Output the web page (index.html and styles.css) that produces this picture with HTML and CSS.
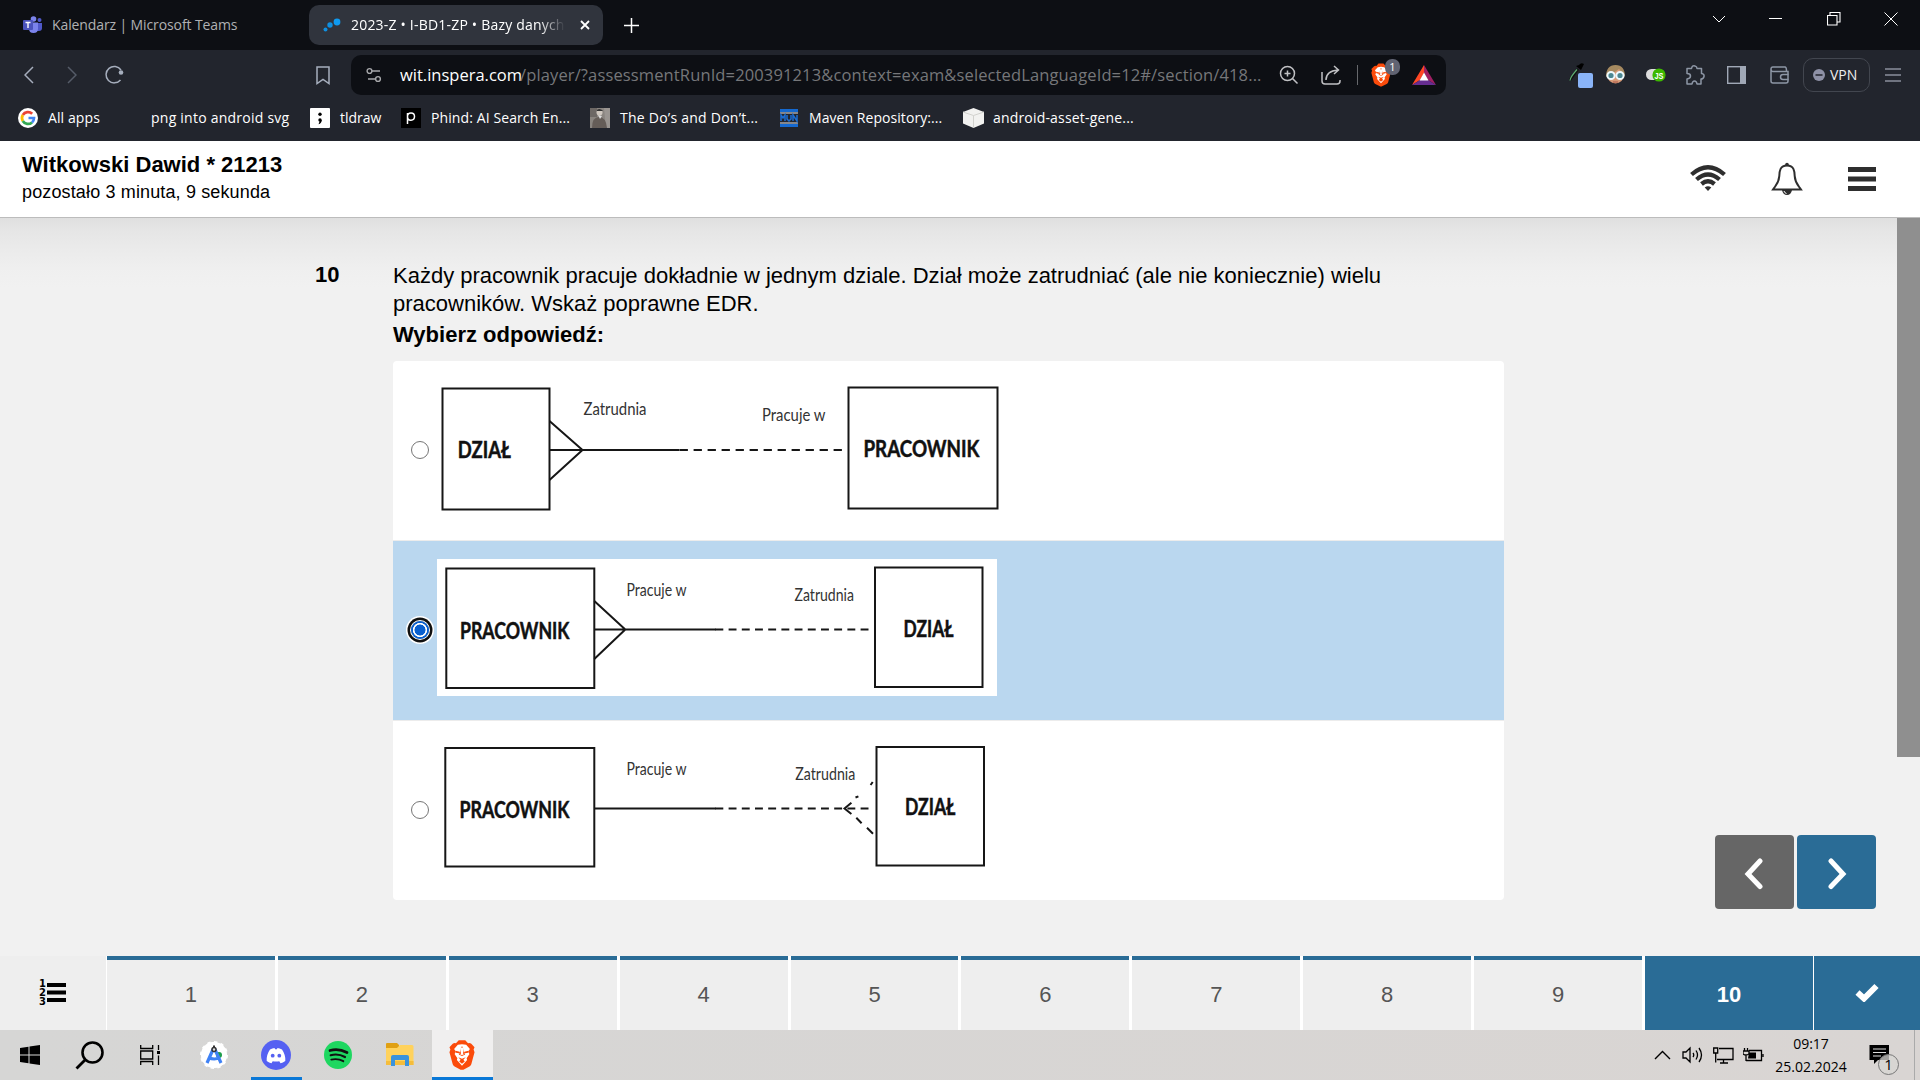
FILE: index.html
```html
<!DOCTYPE html>
<html lang="pl">
<head>
<meta charset="utf-8">
<title>2023-Z • I-BD1-ZP • Bazy danych</title>
<link rel="stylesheet" href="styles.css">
</head>
<body>
<div class="screen">
  <div class="tabstrip">
    <div class="tab">
      <svg class="ic" width="20" height="18" viewBox="0 0 20 18"><circle cx="16.500" cy="4" r="2" fill="#5059c9"/><path d="M14 7h5v5q0 3-3 3h-2z" fill="#5059c9"/><circle cx="10.500" cy="3" r="2.800" fill="#7b83eb"/><path d="M6 6.500h9v6q0 4.500-4.500 4.500T6 12.500z" fill="#7b83eb"/><rect x="0" y="4" width="10" height="10" rx="1" fill="#4b53bc"/><path d="M2.500 6.500h5M5 6.500v5.500" stroke="#fff" stroke-width="1.400"/></svg>
      <span class="t-kal">Kalendarz | Microsoft Teams</span>
    </div>
    <div class="tab active">
      <svg class="ic" width="18" height="16" viewBox="0 0 18 16"><circle cx="2.500" cy="12.500" r="2" fill="#0f8fe0"/><circle cx="7" cy="8" r="2.700" fill="#0f8fe0"/><circle cx="14" cy="5" r="3.400" fill="#0f9af0"/></svg>
      <span class="t-act">2023-Z • I-BD1-ZP • Bazy danych</span>
      <svg class="ic" width="10" height="10" viewBox="0 0 10 10"><path d="M1 1l8 8M9 1L1 9" stroke="#fff" stroke-width="1.800"/></svg>
    </div>
    <svg class="ic plus" width="15" height="15" viewBox="0 0 15 15"><path d="M7.500 0v15M0 7.500h15" stroke="#fff" stroke-width="1.500"/></svg>
    <div class="wincontrols">
      <svg width="14" height="14" viewBox="0 0 14 14"><path d="M1 4l6 6 6-6" fill="none" stroke="#fff"/></svg>
      <svg width="14" height="14" viewBox="0 0 14 14"><path d="M0 6.500h13" stroke="#fff"/></svg>
      <svg width="14" height="14" viewBox="0 0 14 14"><path d="M.5 3.500h9.500v9.500H.5zM3 3V.5h10v9.500h-3" fill="none" stroke="#fff" stroke-width="1.100"/></svg>
      <svg width="14" height="14" viewBox="0 0 14 14"><path d="M.5.500l13 13M13.500.500l-13 13" stroke="#fff"/></svg>
    </div>
  </div>

  <div class="toolbar">
    <svg class="ic back" width="10" height="18" viewBox="0 0 10 18"><path d="M9 1L1 9l8 8" fill="none" stroke="#a6aebd" stroke-width="1.500"/></svg>
    <svg class="ic fwd" width="10" height="18" viewBox="0 0 10 18"><path d="M1 1l8 8-8 8" fill="none" stroke="#555c68" stroke-width="1.500"/></svg>
    <svg class="ic reload" width="20" height="20" viewBox="0 0 20 20"><path d="M16.500 15A8.200 8.200 0 1 1 17 5" fill="none" stroke="#a6aebd" stroke-width="1.500"/><circle cx="17" cy="7.500" r="2.300" fill="#a6aebd"/></svg>
    <svg class="ic mark" width="14" height="19" viewBox="0 0 14 19"><path d="M1 1h12v16.500l-6-4-6 4z" fill="none" stroke="#a6aebd" stroke-width="1.500"/></svg>
    <div class="urlbar">
      <svg class="ic" width="16" height="16" viewBox="0 0 16 16"><g fill="none" stroke="#a8a9ac" stroke-width="1.400"><circle cx="3.500" cy="4" r="2.400"/><path d="M6 4h8M2 12h7"/><circle cx="12" cy="12" r="2.400"/></g></svg>
      <span class="host">wit.inspera.com</span><span class="path">/player/?assessmentRunId=200391213&amp;context=exam&amp;selectedLanguageId=12#/section/418...</span>
      <svg class="ic" width="20" height="20" viewBox="0 0 20 20"><g fill="none" stroke="#c0c1c4" stroke-width="1.500"><circle cx="8.500" cy="8.500" r="7"/><path d="M13.500 13.500l5 5M5.500 8.500h6M8.500 5.500v6"/></g></svg>
      <svg class="ic share" width="20" height="20" viewBox="0 0 20 20"><g fill="none" stroke="#c0c1c4" stroke-width="1.500"><path d="M1 7v9q0 3 3 3h12q3 0 3-3v-1M5 15q0-9 12-10M13 1l4.500 4-4.500 4"/></g></svg>
      <i class="vr"></i>
      <span class="shield"><svg class="ic" width="20" height="24" viewBox="0 0 56 64"><use href="#brave"/></svg><b class="badge">1</b></span>
      <svg class="ic bat" width="24" height="20" viewBox="0 0 24 20"><path d="M12 0L0 20l8-5 4-7z" fill="#ff4724"/><path d="M12 0l12 20-8-5-4-7z" fill="#9e1f63"/><path d="M0 20h24l-8-5H8z" fill="#662d91"/><path d="M12 7.500L16.500 15.500h-9z" fill="#fff"/></svg>
    </div>
    <div class="exts">
      <svg width="26" height="28" viewBox="0 0 26 28"><path d="M2 19L10 8" stroke="#111" stroke-width="2.600"/><path d="M2 19.500q0-3 7-11" fill="none" stroke="#5fae75" stroke-width="1.200"/><path d="M8 5l5 4 3-6q-3-2-5 1z" fill="#000"/><rect x="10" y="12" width="15" height="15" rx="2" fill="#8ab4f8"/></svg>
      <svg class="g12" width="19" height="20" viewBox="0 0 19 20"><circle cx="9.500" cy="10" r="8.500" fill="#d79b78"/><path d="M0 12Q0 0 9.500 0T19 12q-2-5-6-8-5 4-13 8z" fill="#a68a60"/><g fill="#4c8791" stroke="#edf8fc" stroke-width="2"><circle cx="5" cy="10.500" r="3.600"/><circle cx="14" cy="10.500" r="3.600"/></g><path d="M7 17h5" stroke="#a95545"/></svg>
      <svg class="g21" width="20" height="14" viewBox="0 0 20 14"><rect x="0" y="1" width="18" height="11" rx="5.500" fill="#ddd"/><circle cx="13" cy="7" r="6.600" fill="#3db900"/><text x="8.500" y="10.500" class="js" textLength="9" lengthAdjust="spacingAndGlyphs">JS</text></svg>
      <svg class="g20" width="20" height="20" viewBox="0 0 20 20"><path d="M2 3.500h4.500Q7 0 10 1q2 .5 2 2.500h4.500v5q3 .5 2.500 3t-3 2.500V19h-4q-.5-3-2.500-3t-2.500 3H2v-5q3.500-.5 3.500-3T2 8.500z" fill="none" stroke="#8d96a5" stroke-width="1.500" stroke-linejoin="round"/></svg>
      <svg class="g22" width="19" height="18" viewBox="0 0 19 18"><rect x=".7" y=".7" width="17.600" height="16.600" fill="none" stroke="#a0a8b6" stroke-width="1.400"/><path d="M13 0h6v18h-6z" fill="#a0a8b6"/></svg>
      <svg class="g24" width="19" height="18" viewBox="0 0 19 18"><g fill="none" stroke="#8d96a5" stroke-width="1.500"><path d="M1 3.500V15q0 2 2 2h13q2 0 2-2V5.500H3q-2 0-2-2.300T3 1h12q1.500 0 1.500 4"/><path d="M18.500 8.500H13q-2.500 0-2.500 2.500t2.500 2.500h5.500"/></g></svg>
      <div class="vpn"><svg width="12" height="12" viewBox="0 0 12 12"><circle cx="6" cy="6" r="6" fill="#8e91a6"/><path d="M2.500 6h7" stroke="#22252d" stroke-width="1.500"/></svg><span>VPN</span></div>
      <svg class="burger" width="16" height="14" viewBox="0 0 16 14"><path d="M0 1h16M0 7h16M0 13h16" stroke="#8a8f9c" stroke-width="1.600"/></svg>
    </div>
  </div>

  <div class="bookmarks">
    <svg width="20" height="20" viewBox="0 0 20 20"><circle cx="10" cy="10" r="10" fill="#fff"/><g fill="none" stroke-width="2.700"><path d="M14.200 5.800A6 6 0 0 0 4.800 7" stroke="#ea4335"/><path d="M4.800 7a6 6 0 0 0 0 6" stroke="#fbbc05"/><path d="M4.800 13a6 6 0 0 0 9.200 1.400" stroke="#34a853"/><path d="M14 14.400A6 6 0 0 0 16 10h-5.500" stroke="#4285f4"/></g></svg>
    <span class="b1">All apps</span>
    <span class="b2">png into android svg</span>
    <svg width="20" height="20" viewBox="0 0 20 20"><rect width="20" height="20" rx="1" fill="#fff"/><circle cx="10" cy="6.300" r="1.700"/><circle cx="10" cy="12" r="1.700"/><path d="M11.700 12q0 3.500-3.200 4.200l1.500-4z"/></svg>
    <span class="b3">tldraw</span>
    <svg width="20" height="20" viewBox="0 0 20 20"><rect width="20" height="20"/><path d="M6.500 16V5M6.500 8.500q0-3.500 3.500-3.500t3.500 3.500-3.500 3.700-3.500-3.700" fill="none" stroke="#fff" stroke-width="1.500"/></svg>
    <span class="b4">Phind: AI Search En...</span>
    <svg width="20" height="20" viewBox="0 0 20 20"><rect width="20" height="20" fill="#8a8580"/><path d="M0 0h7v9H0z" fill="#6d6865"/><path d="M14 0h6v20h-4z" fill="#9a9591"/><circle cx="9.500" cy="4.500" r="3" fill="#d0c8c0"/><path d="M7 2q2-2 5 0l1 1H7z" fill="#333"/><path d="M2 20q0-11 7-11t8 11z" fill="#655d58"/><path d="M8 7l4 1-2 3z" fill="#ddd"/></svg>
    <span class="b5">The Do’s and Don’t...</span>
    <svg width="18" height="18" viewBox="0 0 18 18"><path d="M0 0h18v3H0zM0 15h18v3H0z" fill="#1569cf"/><path d="M0 4h18M0 14h18" stroke="#e8e8e8"/><path d="M1 12V6l2 3 2-3v6M7 6v4l2 2 2-2V6M13 12V6l4 6V6" fill="none" stroke="#1c6ed4" stroke-width="1.500"/></svg>
    <span class="b6">Maven Repository:...</span>
    <svg width="21" height="20" viewBox="0 0 21 20"><path d="M10.500 0L21 4v11.500L10.500 20 0 15.500V4z" fill="#f2f2f0"/><path d="M0 4l10.500 3.500L21 4M10.500 7.500V20" fill="none" stroke="#d2d2ce"/></svg>
    <span class="b7">android-asset-gene...</span>
  </div>

  <header class="exam-head">
    <div class="who">
      <h1>Witkowski Dawid * 21213</h1>
      <p>pozostało 3 minuta, 9 sekunda</p>
    </div>
    <svg class="wifi" width="36" height="26" viewBox="0 0 36 26"><g fill="none" stroke="#2e2e2e" stroke-width="4.300"><path d="M1.500 9.500Q18-5 34.500 9.500"/><path d="M6.500 14.500Q18 4.500 29.500 14.500"/><path d="M11.500 19Q18 13.500 24.500 19"/></g><path d="M18 26l-3.300-3.500q3.300-2.300 6.600 0z" fill="#2e2e2e"/></svg>
    <svg class="bell" width="32" height="34" viewBox="0 0 32 34"><path d="M16 3.500C9 3.500 8.500 9 8.300 14 8 21 5 23 2 27.500h28C27 23 24 21 23.700 14 23.500 9 23 3.500 16 3.500z" fill="none" stroke="#2e2e2e" stroke-width="2"/><circle cx="16" cy="2.500" r="1.800" fill="#2e2e2e"/><path d="M11 28h10q-1 5-5 5t-5-5z" fill="#2e2e2e"/><path d="M13 29q.5 2 2.500 2.500" fill="none" stroke="#fff"/></svg>
    <svg class="menu" width="28" height="24" viewBox="0 0 28 24"><path d="M0 2.500h28M0 12h28M0 21.500h28" stroke="#2e2e2e" stroke-width="4.800"/></svg>
  </header>

  <main class="content">
    <div class="question">
      <div class="qnum">10</div>
      <div class="qbody">
        <p>Każdy pracownik pracuje dokładnie w jednym dziale. Dział może zatrudniać (ale nie koniecznie) wielu<br>pracowników. Wskaż poprawne EDR.</p>
        <p class="pick">Wybierz odpowiedź:</p>
        <div class="options">
          <div class="option">
            <i class="radio"></i>
            <svg class="erd" width="560" height="137" viewBox="437 379 560 137">
              <rect x="442.500" y="388.500" width="107" height="121"/><rect x="848.500" y="387.500" width="149" height="121"/>
              <path d="M549.500 421l33 29-33 30M549.500 450H679.500"/><path class="dash1" d="M679.600 450H842"/>
              <text class="lbl" x="583.500" y="415.400" textLength="63" lengthAdjust="spacingAndGlyphs">Zatrudnia</text>
              <text class="lbl" x="762" y="420.700" textLength="63.500" lengthAdjust="spacingAndGlyphs">Pracuje w</text>
              <text class="ent" x="457.800" y="458.300" textLength="53" lengthAdjust="spacingAndGlyphs">DZIAŁ</text>
              <text class="ent" x="863.500" y="457.300" textLength="116" lengthAdjust="spacingAndGlyphs">PRACOWNIK</text>
            </svg>
          </div>
          <div class="option chosen">
            <i class="radio on"></i>
            <svg class="erd" width="560" height="137" viewBox="437 559 560 137">
              <rect x="446.300" y="568.500" width="148" height="119.500"/><rect x="875" y="567.500" width="107.500" height="119.500"/>
              <path d="M594.300 601l31 28.500-31 29.500M594.300 629.500H716"/><path class="dash2" d="M715.400 629.500H869"/>
              <text class="lbl" x="626.500" y="595.600" textLength="60" lengthAdjust="spacingAndGlyphs">Pracuje w</text>
              <text class="lbl" x="794.500" y="600.500" textLength="59.500" lengthAdjust="spacingAndGlyphs">Zatrudnia</text>
              <text class="ent" x="460" y="638.800" textLength="109.500" lengthAdjust="spacingAndGlyphs">PRACOWNIK</text>
              <text class="ent" x="903.500" y="636.700" textLength="50" lengthAdjust="spacingAndGlyphs">DZIAŁ</text>
            </svg>
          </div>
          <div class="option">
            <i class="radio"></i>
            <svg class="erd" width="560" height="137" viewBox="437 739 560 137">
              <rect x="445.300" y="748" width="149" height="118.500"/><rect x="876.500" y="747" width="107.500" height="118.500"/>
              <path d="M594.300 808.500H716M851.400 802.700l-6.900 5.800 6.900 5.500M855.500 797.500l2.900-1.200M870.600 785l2.100-3M856.300 817.700l5.300 5.600M867 827.700l6 6"/><path class="dash2" d="M715.400 808.500H869"/>
              <text class="lbl" x="626.500" y="774.700" textLength="60" lengthAdjust="spacingAndGlyphs">Pracuje w</text>
              <text class="lbl" x="795.300" y="779.700" textLength="60" lengthAdjust="spacingAndGlyphs">Zatrudnia</text>
              <text class="ent" x="459.500" y="817.500" textLength="110" lengthAdjust="spacingAndGlyphs">PRACOWNIK</text>
              <text class="ent" x="905" y="815.300" textLength="50.500" lengthAdjust="spacingAndGlyphs">DZIAŁ</text>
            </svg>
          </div>
        </div>
      </div>
    </div>
    <div class="scrollbar"></div>
    <div class="pager">
      <button class="prev"><svg width="20" height="32" viewBox="0 0 20 32"><path d="M16 3L4 16l12 12.500" fill="none" stroke="#fff" stroke-width="5" stroke-linecap="round"/></svg></button>
      <button class="next"><svg width="20" height="32" viewBox="0 0 20 32"><path d="M4 3l12 13L4 28.500" fill="none" stroke="#fff" stroke-width="5" stroke-linecap="round"/></svg></button>
    </div>
  </main>

  <nav class="qnav">
    <div class="list"><svg width="27" height="34" viewBox="0 -4 27 34"><path d="M8 5h19M8 12.500h19M8 20h19" stroke="#000" stroke-width="3.800"/><g class="digits"><text x="0" y="7">1</text><text x="0" y="16">2</text><text x="0" y="25.200">3</text></g></svg></div>
    <div class="cells"><a>1</a><a>2</a><a>3</a><a>4</a><a>5</a><a>6</a><a>7</a><a>8</a><a>9</a><a class="cur">10</a></div>
    <div class="done"><svg width="24" height="19" viewBox="0 0 24 19"><path d="M2.500 9.500l6.500 6L21.500 3" fill="none" stroke="#fff" stroke-width="6"/></svg></div>
  </nav>

  <footer class="taskbar">
    <svg class="win" width="20" height="20" viewBox="0 0 20 20"><path d="M0 3l8.500-1.300v7.800H0zM9.500 1.500L20 0v9.500H9.500zM0 10.500h8.500v7.800L0 17zM9.500 10.500H20V20L9.500 18.500z"/></svg>
    <svg class="search" width="29" height="29" viewBox="0 0 29 29"><circle cx="17.500" cy="11.500" r="10" fill="none" stroke="#000" stroke-width="2.600"/><path d="M10.500 18.500L1.500 27.500" stroke="#000" stroke-width="2.800"/></svg>
    <svg class="tview" width="21" height="20" viewBox="0 0 21 20"><g fill="none" stroke="#000" stroke-width="1.300"><path d="M.7 0v3.500h12V0M.7 20v-3.500h12V20M.7 6h12v8H.7zM18.500 0v5M18.500 10.500V20"/></g><path d="M17 6h3v3h-3z"/></svg>
    <svg class="astudio" width="28" height="28" viewBox="0 0 28 28"><circle cx="14" cy="14" r="12.700" fill="#fff" stroke="#fff" stroke-width="2.600" stroke-dasharray="3.300 3.300"/><circle cx="14" cy="14" r="13" fill="#fff"/><circle cx="19" cy="14" r="3" fill="#1e9e4a"/><path d="M13 8.500L7 22M15 8.500l6 13.500M8 16.500q7 3 11 0" fill="none" stroke="#3f82f5" stroke-width="3.200"/><circle cx="14" cy="8.500" r="2" fill="#ddd" stroke="#333" stroke-width="1.500"/><path d="M14 4.500v2" stroke="#333" stroke-width="2"/></svg>
    <div class="app discord"><svg width="30" height="30" viewBox="0 0 30 30"><circle cx="15" cy="15" r="15" fill="#5561f2"/><path d="M9 9.500q2.500-1.300 4.500-1.500l.6 1.200h1.800l.6-1.200q2 .2 4.500 1.500 3.800 5.500 3.300 11.500-2.500 1.800-4.800 2.200l-1.200-2q-3.300.7-6.600 0l-1.200 2Q8.200 22.800 5.700 21 5.200 15 9 9.500z" fill="#fff"/><circle cx="11.700" cy="15.700" r="1.900" fill="#5561f2"/><circle cx="18.300" cy="15.700" r="1.900" fill="#5561f2"/></svg></div>
    <svg class="spotify" width="28" height="28" viewBox="0 0 28 28"><circle cx="14" cy="14" r="14" fill="#1ed760"/><g fill="none" stroke="#111" stroke-linecap="round"><path d="M6 9.500q8.500-2.500 17 2" stroke-width="2.700"/><path d="M6.700 14.200q7.500-2 14.300 1.800" stroke-width="2.200"/><path d="M7.300 18.600q6.500-1.500 12 1.600" stroke-width="1.900"/></g></svg>
    <svg class="folder" width="28" height="24" viewBox="0 0 28 24"><path d="M0 1q0-1 1-1h10l2 2v4H0z" fill="#e0a013"/><path d="M0 5h11l3-3h12q1.500 0 1.500 1.500V22H0z" fill="#ffd25c"/><path d="M0 18h27.500v4H0z" fill="#f5bd3b"/><path d="M5 23V14q0-2 2-2h14q2 0 2 2v9h-4v-6H9v6z" fill="#3a93dd"/></svg>
    <div class="app brave"><svg width="26" height="30" viewBox="0 0 56 64">
      <g id="brave"><path d="M53 20l2-4.500-7-7.500q-3-3-7-1.500L35 0H21l-6 6.500q-4-1.500-7 1.500l-7 7.500L3 20l-2 6 7 26q1 3 4 5l13 6.500q3 1 6 0L44 57q3-2 4-5l7-26z" fill="#fb4b0b"/><path d="M28 9l-9 1-8 9 4 6-3 5 6 9-1 4 11 12 11-12-1-4 6-9-3-5 4-6-8-9z" fill="#fff"/><path d="M14 23l9 2 1 4-9-2zM42 23l-9 2-1 4 9-2zM26 14h4l2 13 3 4-7 3-7-3 3-4zM20 37l8 3 8-3-5 5 3 4-6 5-6-5 3-4z" fill="#fb4b0b"/><path d="M24 16h8l-2 12 2 3-4 1-4-1 2-3z" fill="#fff"/></g></svg></div>
    <div class="tray">
      <svg width="17" height="10" viewBox="0 0 17 10"><path d="M1 9l7.500-7.500L16 9" fill="none" stroke="#000" stroke-width="1.400"/></svg>
      <svg class="vol" width="22" height="18" viewBox="0 0 22 18"><g fill="none" stroke="#000" stroke-width="1.300"><path d="M1 6h3l4-4v14l-4-4H1zM11 7q1.500 2 0 4M14 4.500q3 4.500 0 9M17 2q5 7 0 14"/></g></svg>
      <svg class="net" width="21" height="17" viewBox="0 0 21 17"><g fill="none" stroke="#000" stroke-width="1.300"><path d="M6 1.500h14v11H4M10.500 13v3M7 16h8M.7 1h4v5h-4zM2.700 6v9.500"/></g></svg>
      <svg class="batt" width="21" height="14" viewBox="0 0 21 14"><g fill="none" stroke="#000" stroke-width="1.300"><path d="M6 2.500h12.500v10H3M3 7v6M0 3h6v3q-3 2-6 0zM1.500 0v3M4.500 0v3M20 6v3"/></g><path d="M6 4.500h7v6H5z"/></svg>
      <div class="clock"><span class="tm">09:17</span><span class="dt">25.02.2024</span></div>
      <div class="notif"><svg width="21" height="20" viewBox="0 0 21 20"><path d="M.5 0H20v15H9l-4 4v-4H.5z"/><path d="M4 4h13M4 7.500h13M4 11h8" stroke="#ddd" stroke-width="1.200"/></svg><b>1</b></div>
      <i class="peek"></i>
    </div>
  </footer>
</div>
</body>
</html>
```
FILE: styles.css
```css
* { box-sizing: border-box; }
body { margin: 0; background: #f1f1f1; font-family: "Liberation Sans", sans-serif; color: #000; }
.screen { width: 1920px; height: 1080px; overflow: hidden; display: flex; flex-direction: column; }
svg { display: block; flex: none; }
span { white-space: nowrap; }
h1, p { margin: 0; }

.tabstrip, .toolbar, .bookmarks { font-family: "Open Sans", "Noto Sans", sans-serif; display: flex; align-items: center; flex: none; }
.tabstrip { height: 50px; background: #0d0f14; font-size: 14px; }
.tab { display: flex; align-items: center; width: 286px; height: 40px; padding-left: 23px; color: #b0b1b3; }
.tab span { padding-bottom: 2px; }
.t-kal { margin-left: 9px; letter-spacing: -.11px; }
.tab.active { margin-left: 23px; width: 294px; border-radius: 10px; background: #30343d; color: #fff; padding-left: 14px; }
.t-act { width: 214px; margin: 0 15px 0 10px; letter-spacing: .2px; overflow: hidden; -webkit-mask-image: linear-gradient(90deg, #000 88%, transparent 100%); mask-image: linear-gradient(90deg, #000 88%, transparent 100%); }
.plus { margin-left: 21px; }
.wincontrols { margin-left: auto; padding-right: 22px; display: flex; gap: 43.500px; align-self: flex-start; padding-top: 12px; }

.toolbar { height: 50px; background: #22252d; }
.back { margin-left: 24px; }
.fwd { margin-left: 33px; }
.reload { margin-left: 27px; }
.mark { margin-left: 192px; }
.urlbar { display: flex; align-items: center; width: 1095px; height: 40px; margin-left: 21px; padding-left: 15px; border-radius: 10px; background: #0d0f14; font-size: 16.500px; }
.urlbar > span { padding-bottom: 1px; }
.host { width: 120px; margin-left: 18px; color: #fff; }
.path { width: 742px; margin-right: 17px; color: #76777a; letter-spacing: .13px; }
.share { margin-left: 22px; }
.vr { width: 1px; height: 20px; margin-left: 16px; background: #66686c; }
.shield { position: relative; margin-left: 13px; }
.badge { position: absolute; left: 14px; top: -4px; width: 15px; height: 16px; border-radius: 7px; background: #606372; color: #fff; font: 11px/16px "Open Sans", sans-serif; text-align: center; }
.bat { margin-left: 21px; }
.exts { display: flex; align-items: center; margin-left: 122px; }
.g12 { margin-left: 12px; }
.g21 { margin-left: 21px; }
.g20 { margin-left: 19px; }
.g22 { margin-left: 22px; }
.g24 { margin-left: 24px; }
.js { font: bold 9px "Liberation Sans", sans-serif; fill: #fff; }
.vpn { display: flex; align-items: center; gap: 5px; width: 67px; height: 34px; margin-left: 14px; padding-left: 9px; border: 1px solid #42464f; border-radius: 10px; color: #eee; font-size: 14px; }
.vpn span { padding-bottom: 1px; }
.burger { margin-left: 15px; }

.bookmarks { height: 41px; padding: 0 0 5px 18px; background: #22252d; color: #fff; font-size: 14px; }
.bookmarks span { margin-left: 10px; flex: none; padding-bottom: 2px; letter-spacing: .1px; }
.bookmarks .b1 { width: 103px; }
.bookmarks .b2 { margin-left: 0; width: 159px; letter-spacing: .24px; }
.bookmarks .b3 { width: 61px; letter-spacing: 0; }
.bookmarks .b4 { width: 159px; }
.bookmarks .b5 { width: 160px; letter-spacing: .24px; }
.bookmarks .b6 { width: 154px; margin-left: 11px; letter-spacing: .06px; }
.bookmarks .b7 { margin-left: 9px; letter-spacing: .18px; }

.exam-head { display: flex; flex: none; height: 77px; padding: 10px 44px 0 22px; background: #fff; border-bottom: 1px solid #bcbcbc; }
.who { flex: 1; }
.who h1 { font-size: 22px; line-height: 27px; }
.who p { font-size: 18px; line-height: 26px; margin-top: 1px; letter-spacing: .14px; }
.wifi { margin: 14px 45px 0 0; }
.bell { margin: 11px 45px 0 0; }
.menu { margin-top: 16px; }

.content { position: relative; flex: 1; display: flex; background: linear-gradient(#dfdfdf 0, #e6e6e6 14px, #ebebeb 32px, #efefef 50px, #f1f1f1 70px); }
.question { display: flex; flex: 1; padding: 44px 0 0 315px; font-size: 22px; line-height: 28px; }
.qnum { width: 78px; font-weight: bold; margin-top: -1px; }
.pick { font-weight: bold; margin-top: 3px; }
.options { width: 1111px; margin-top: 12px; border-radius: 4px; background: #fff; overflow: hidden; }
.option { display: flex; align-items: center; height: 180px; border-bottom: 1px solid #ececec; padding: 0 0 6px 18px; }
.option:last-child { border-bottom: 0; height: 179px; }
.chosen { background: #bad7ef; }
.radio { width: 18px; height: 18px; margin: 5px 8px 0 0; border: 1px solid #767676; border-radius: 50%; background: #fff; }
.radio.on { border: 0; background: radial-gradient(circle, #0a5fce 5.200px, #fff 5.800px, #fff 6.800px, #0a5fce 7.400px); box-shadow: 0 0 0 1px #fff, 0 0 0 3.500px #101010, 0 0 0 5px #fff; }
.erd { background: #fff; overflow: visible; }
.erd rect, .erd path { fill: none; stroke: #161616; stroke-width: 2; }
.erd .dash1 { stroke-dasharray: 8.300 5.700; }
.erd .dash2 { stroke-dasharray: 7.900 5.300; }
.lbl { font: 17.500px Lato, sans-serif; fill: #333; }
.ent { font: bold 22.500px Lato, sans-serif; fill: #111; stroke: #111; stroke-width: .5px; }
.scrollbar { flex: none; width: 23px; height: 539px; background: #8f8f8f; }
.pager { position: absolute; left: 1715px; top: 617px; display: flex; gap: 3px; }
.pager button { display: flex; align-items: center; justify-content: center; width: 79px; height: 74px; border: 0; padding: 3px 1px 0 0; border-radius: 4px; }
.prev { background: #666; }
.pager .next { background: #2a6c96; padding: 3px 0 0 1px; }

.qnav { display: flex; flex: none; height: 74px; background: #fff; }
.list { width: 106px; margin-right: 1px; padding: 20px 0 0 39px; background: #eee; }
.digits { font: bold 10px "DejaVu Sans", sans-serif; }
.cells { display: grid; grid-template-columns: repeat(10, 1fr); gap: 3px; width: 1706px; }
.cells a { border-top: 4px solid #2a6c96; background: #eee; color: #555; font-size: 22px; line-height: 70px; height: 74px; text-align: center; }
.cells .cur { background: #2a6c96; color: #fff; font-weight: bold; }
.done { flex: 1; margin-left: 1px; padding: 27px 0 0 41px; background: #2a6c96; }

.taskbar { display: flex; flex: none; align-items: center; height: 50px; background: linear-gradient(90deg, #d6d6d5, #d9d5d3); }
.win { margin-left: 20px; }
.search { margin-left: 35px; }
.tview { margin-left: 36px; }
.astudio { margin-left: 39px; }
.app { display: flex; align-items: center; justify-content: center; height: 50px; border-bottom: 3px solid #0a78d7; padding-top: 3px; }
.discord { width: 51px; margin-left: 23px; padding-right: 2px; }
.spotify { margin-left: 22px; }
.folder { margin-left: 34px; }
.brave { width: 61px; margin-left: 18px; background: #f0efef; padding-right: 1px; }
.tray { display: flex; align-items: center; margin-left: auto; height: 50px; }
.vol { margin-left: 11px; }
.net { margin-left: 9px; }
.batt { margin-left: 9px; }
.clock { display: flex; flex-direction: column; align-items: center; width: 70px; margin-left: 12px; font: 14px/23px "Open Sans", sans-serif; }
.notif { position: relative; margin-left: 23px; }
.notif b { position: absolute; left: 9px; top: 9px; width: 21px; height: 21px; border: 1px solid #777; border-radius: 50%; background: rgba(215,213,211,.75); font: 15px/19px "Open Sans", sans-serif; text-align: center; }
.peek { width: 1px; height: 50px; margin: 0 5px 0 24px; background: #aaa; }
```
